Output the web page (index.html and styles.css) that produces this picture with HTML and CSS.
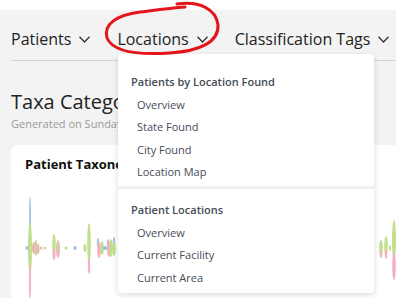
FILE: index.html
```html
<!doctype html>
<html lang="en">
<head>
<meta charset="utf-8" />
<title>Taxa Categories</title>
<link rel="stylesheet" href="styles.css">
</head>
<body>
 <div class="topbar"></div>
 <main class="page">
   <nav class="nav">
     <a class="nav-item">Patients <svg class="chev" width="11" height="7" viewBox="0 0 11 7"><polyline points="0.5,0.8 5.5,6 10.5,0.8" /></svg></a>
     <a class="nav-item">Locations <svg class="chev" width="11" height="7" viewBox="0 0 11 7"><polyline points="0.5,0.8 5.5,6 10.5,0.8" /></svg></a>
     <a class="nav-item">Classification Tags <svg class="chev" width="11" height="7" viewBox="0 0 11 7"><polyline points="0.5,0.8 5.5,6 10.5,0.8" /></svg></a>
   </nav>

   <h1 class="title">Taxa Categories</h1>
   <div class="subtitle">Generated on Sunday, March 3, 2024</div>

   <section class="card">
     <h3 class="card-title">Patient Taxonomy Distribution</h3>
     <svg class="chart" width="390" height="110" viewBox="11 190 390 110">
       <!-- violins, centre line y=244 -->
       <g opacity="0.62">
         <ellipse cx="27" cy="244" rx="1.5" ry="2" fill="#5b9bd5" />
         <ellipse cx="30" cy="212" rx="1" ry="20" fill="#6fa8dc" />
         <ellipse cx="30" cy="244" rx="2" ry="26" fill="#9ccc4a" />
         <ellipse cx="30" cy="278" rx="1" ry="19" fill="#ef7f9a" />
         <ellipse cx="34" cy="244" rx="2" ry="6" fill="#ef7f9a" />
         <ellipse cx="36" cy="244" rx="1.5" ry="8" fill="#9ccc4a" />
         <ellipse cx="38" cy="245" rx="1.5" ry="5" fill="#ef7f9a" />
         <ellipse cx="41" cy="244" rx="1.5" ry="1.5" fill="#ef7f9a" />
         <ellipse cx="45" cy="244" rx="1.5" ry="1.5" fill="#9ccc4a" />
         <ellipse cx="54" cy="241" rx="1.8" ry="11" fill="#9ccc4a" />
         <ellipse cx="54" cy="250" rx="1.5" ry="6" fill="#ef7f9a" />
         <ellipse cx="58" cy="245" rx="2" ry="9" fill="#ef7f9a" />
         <ellipse cx="58" cy="243" rx="1.2" ry="6" fill="#9ccc4a" />
         <ellipse cx="66" cy="244" rx="1.5" ry="1.5" fill="#9ccc4a" />
         <ellipse cx="75" cy="244" rx="1.5" ry="2" fill="#5b9bd5" />
         <ellipse cx="85" cy="244" rx="1.5" ry="4" fill="#9ccc4a" />
         <ellipse cx="89" cy="240" rx="1.8" ry="21" fill="#9ccc4a" />
         <ellipse cx="89" cy="262" rx="1.2" ry="8" fill="#ef7f9a" />
         <ellipse cx="98" cy="239" rx="1.2" ry="5" fill="#6fa8dc" />
         <ellipse cx="99" cy="246" rx="1.8" ry="8" fill="#ef7f9a" />
         <ellipse cx="102" cy="244" rx="1.8" ry="7" fill="#9ccc4a" />
         <ellipse cx="105" cy="244" rx="2.2" ry="2" fill="#5b9bd5" />
         <ellipse cx="108" cy="240" rx="1.2" ry="5" fill="#6fa8dc" />
         <ellipse cx="109" cy="245" rx="2" ry="8" fill="#ef7f9a" />
         <ellipse cx="111" cy="244" rx="1.8" ry="9" fill="#9ccc4a" />
         <ellipse cx="114" cy="238" rx="1.2" ry="5" fill="#6fa8dc" />
         <ellipse cx="114" cy="245" rx="1.8" ry="7" fill="#9ccc4a" />
         <ellipse cx="381" cy="244" rx="1.8" ry="8" fill="#9ccc4a" />
         <ellipse cx="381" cy="250" rx="1.2" ry="4" fill="#ef7f9a" />
         <ellipse cx="386" cy="242" rx="1.8" ry="10" fill="#9ccc4a" />
         <ellipse cx="386" cy="250" rx="1.2" ry="5" fill="#ef7f9a" />
         <ellipse cx="390" cy="244" rx="1.2" ry="3" fill="#9ccc4a" />
         <ellipse cx="394" cy="236" rx="2" ry="20" fill="#9ccc4a" />
         <ellipse cx="394" cy="262" rx="1.8" ry="14" fill="#ef7f9a" />
       </g>
     </svg>
   </section>
 </main>

 <!-- open dropdown under Locations -->
 <div class="dropdown">
   <div class="dd-section">
     <div class="dd-head">Patients by Location Found</div>
     <a class="dd-item">Overview</a>
     <a class="dd-item">State Found</a>
     <a class="dd-item">City Found</a>
     <a class="dd-item">Location Map</a>
   </div>
   <div class="dd-sep"></div>
   <div class="dd-section second">
     <div class="dd-head">Patient Locations</div>
     <a class="dd-item">Overview</a>
     <a class="dd-item">Current Facility</a>
     <a class="dd-item">Current Area</a>
   </div>
 </div>

 <!-- hand drawn annotation -->
 <svg class="scribble" width="396" height="70" viewBox="0 0 396 70">
   <path d="M177,4 C200,1 216,9 218,25 C219,42 200,51 170,53 C140,55 113,52 107,38 C103,24 117,15 140,12 C156,10 170,8 185,7" />
 </svg>
</body>
</html>
```
FILE: styles.css
```css
:root{
 --bg:#f3f3f3;
 --text:#222;
 --muted:#9a9a9a;
 --menu-text:#454c57;
 --rule:#d4d4d4;
}
*{box-sizing:border-box;margin:0;padding:0}
html,body{height:100%;overflow:hidden}
body{
  background:var(--bg);color:var(--text);
  font-family:"Open Sans",sans-serif;
}
.topbar{height:10px;background:#fff}
.page{padding:0 0 0 11px}

.nav{
  display:flex;gap:27px;align-items:center;
  height:51px;padding-top:8px;
  border-bottom:1px solid var(--rule);
  white-space:nowrap;
}
.nav-item{display:flex;align-items:center;gap:8px;font-size:16px;color:#222}
.chev{fill:none;stroke:#333;stroke-width:1.3;margin-top:1px}

.title{font-size:20px;font-weight:400;line-height:24px;margin-top:29px;color:#222;white-space:nowrap}
.subtitle{font-size:11px;color:var(--muted);line-height:14px;margin-top:3px;white-space:nowrap}

.card{
  margin-top:14px;background:#fff;border-radius:6px;
  width:420px;height:200px;padding:10px 14px;
}
.card-title{font-size:13px;font-weight:700;line-height:18px;color:#111;white-space:nowrap}
.chart{display:block;margin:21px 0 0 -14px;overflow:visible}

.dropdown{
  position:absolute;top:54px;left:118px;width:256px;height:239px;
  background:#fff;border-radius:4px;
  box-shadow:0 2px 6px rgba(0,0,0,0.14);
  padding-top:17px;
}
.dd-section{display:flex;flex-direction:column}
.dd-section.second{padding-top:10.5px}
.dd-head{font-size:11px;font-weight:600;line-height:22.5px;color:var(--menu-text);padding-left:13px}
.dd-item{font-size:11px;line-height:22.5px;color:var(--menu-text);padding-left:19px}
.dd-sep{height:3px;background:#f1f1f1;margin-top:2px}

.scribble{position:absolute;top:0;left:0;pointer-events:none}
.scribble path{fill:none;stroke:#e3141b;stroke-width:3;stroke-linecap:round}
```
